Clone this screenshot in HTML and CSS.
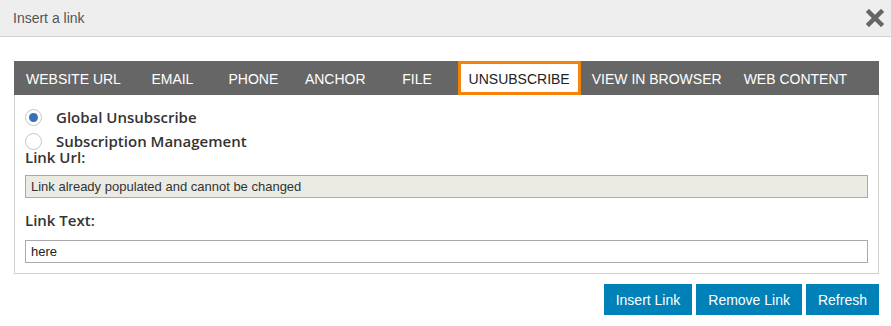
FILE: index.html
```html
<html>

<head>
    <link rel="stylesheet" href="styles.css">
</head>

<body>
    <div class="dialog">
        <div class="dialog-header">
            <span class="dialog-title">Insert a link</span>
            <a href="#" class="dialog-close">
                <svg width="18" height="18" viewBox="0 0 18 18">
                    <path d="M3 3 L15 15 M15 3 L3 15" stroke="#666" stroke-width="4.5" stroke-linecap="square" />
                </svg>
            </a>
        </div>

        <div class="link-panel">
            <ul class="link-tabs">
                <li><a href="#">Website URL</a></li>
                <li><a href="#">Email</a></li>
                <li><a href="#">Phone</a></li>
                <li><a href="#">Anchor</a></li>
                <li><a href="#">File</a></li>
                <li class="is-active"><a href="#">Unsubscribe</a></li>
                <li><a href="#">View in browser</a></li>
                <li><a href="#">Web content</a></li>
            </ul>

            <div class="link-body">
                <label class="radio-row">
                    <input type="radio" name="unsub" checked>
                    <span>Global Unsubscribe</span>
                </label>
                <label class="radio-row">
                    <input type="radio" name="unsub">
                    <span>Subscription Management</span>
                </label>

                <div class="field-label first">Link Url:</div>
                <input class="field-input is-locked" type="text" value="Link already populated and cannot be changed" disabled>

                <div class="field-label">Link Text:</div>
                <input class="field-input" type="text" value="here">
            </div>
        </div>

        <div class="dialog-actions">
            <button class="btn">Insert Link</button>
            <button class="btn">Remove Link</button>
            <button class="btn">Refresh</button>
        </div>
    </div>
</body>

</html>
```

FILE: styles.css
```css
* {
    -webkit-box-sizing: border-box;
    -moz-box-sizing: border-box;
    box-sizing: border-box;
}

body {
    margin: 0;
    background: #fff;
    font-family: 'Liberation Sans', Arial, sans-serif;
    font-size: 14px;
    color: #333;
}

.dialog-header {
    height: 37px;
    background: #eee;
    border-bottom: solid 1px #d2d2d2;
    display: flex;
    align-items: center;
    justify-content: space-between;
    padding: 0 7px 0 13px;
}

.dialog-title {
    color: #555;
    font-size: 14px;
}

.dialog-close {
    display: flex;
    margin-top: -1px;
}

.link-panel {
    margin: 24px 12px 0 14px;
    border: solid 1px #d0d0d0;
    border-top: 0;
}

.link-tabs {
    list-style: none;
    margin: 0 -1px;
    padding: 0 0 0 1px;
    display: flex;
    height: 34px;
    background: #666;
}

.link-tabs li {
    display: flex;
    flex-shrink: 0;
}

.link-tabs a {
    display: flex;
    align-items: center;
    justify-content: center;
    min-width: 81px;
    padding: 2px 11px 0;
    color: #fff;
    text-decoration: none;
    text-transform: uppercase;
    white-space: nowrap;
    font-size: 14px;
    border: solid 3px transparent;
    border-left: 0;
    border-right: 0;
}

.link-tabs .is-active a {
    background: #fff;
    color: #222;
    border: solid 3px #f5820b;
    padding: 2px 8px 0;
}

.link-body {
    padding: 10px 10px 10px 10px;
}

.radio-row {
    display: flex;
    align-items: center;
    height: 24px;
    font-family: 'Open Sans', sans-serif;
    font-weight: 600;
    font-size: 15px;
    color: #333;
}

.radio-row input {
    -webkit-appearance: none;
    appearance: none;
    margin: 0 14px 0 0;
    width: 17px;
    height: 17px;
    border-radius: 50%;
    border: solid 1px #c4c4c4;
    background: #fff;
    position: relative;
    flex-shrink: 0;
}

.radio-row input:checked::after {
    content: '';
    position: absolute;
    left: 3px;
    top: 3px;
    width: 9px;
    height: 9px;
    border-radius: 50%;
    background: #3571b5;
}

.field-label {
    font-family: 'Open Sans', sans-serif;
    font-weight: 600;
    font-size: 15px;
    line-height: 20px;
    color: #333;
    margin: 12px 0 10px;
}

.field-label.first {
    margin: -6px 0 8px;
}

.field-input {
    display: block;
    width: 100%;
    height: 23px;
    border: solid 1px #aaa;
    padding: 0 5px;
    font-family: 'Liberation Sans', Arial, sans-serif;
    font-size: 13px;
    color: #222;
    background: #fff;
}

.field-input.is-locked {
    background: #ebebe4;
    color: #333;
}

.dialog-actions {
    display: flex;
    justify-content: flex-end;
    gap: 4px;
    margin: 10px 12px 0 0;
}

.btn {
    height: 31px;
    padding: 0 12px;
    border: 0;
    background: #0081b8;
    color: #fff;
    font-family: 'Liberation Sans', Arial, sans-serif;
    font-size: 14px;
}
```
